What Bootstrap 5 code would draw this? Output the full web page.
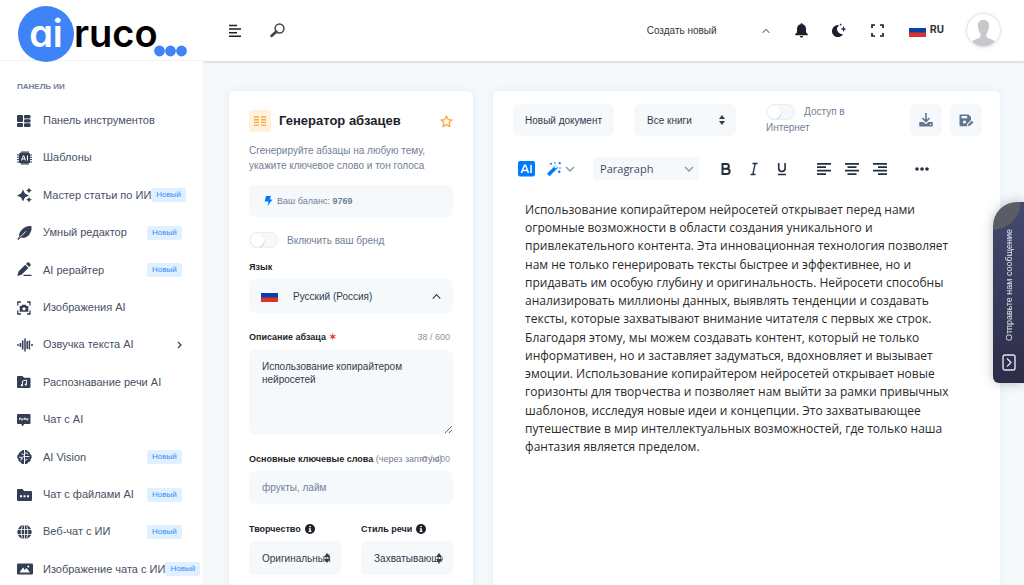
<!DOCTYPE html>
<html lang="ru">
<head>
<meta charset="utf-8">
<meta name="viewport" content="width=device-width, initial-scale=1">
<title>airuco – Генератор абзацев</title>
<link href="https://cdn.jsdelivr.net/npm/bootstrap@5.3.0/dist/css/bootstrap.min.css" rel="stylesheet">
<style>
:root{--soft:#f5f9fc;--ink:#1e1e2d;--slate:#3c465a;--dim:#728096;--azure:#007bff}
body{font-family:"Liberation Sans",Arial,sans-serif;font-size:10px;line-height:15px;color:var(--ink);background:var(--soft)}
svg{display:block;flex:none}
button{line-height:inherit;color:inherit}
.sidebar{width:203px;flex:none;background:#fff}
.brand-row{height:61px;border-bottom:1px solid #eff1f4;padding:6px 0 0 18px}
.brand-logo{font-family:Inter,sans-serif;font-weight:600;font-size:38px;line-height:54px;font-feature-settings:"cv11";color:#000;position:relative}
.brand-disc{width:56px;height:56px;background:#3f83f8;color:#fff;border-radius:50%}
.brand-dots{position:absolute;left:136px;top:39px}
.side-title{font-size:8px;font-weight:700;color:var(--dim);padding:18px 17px 0;line-height:15px}
.side-list{padding:8px 4px 0 17px}
.side-link{display:flex;align-items:center;font-size:11px;line-height:3.4;color:#475063;text-decoration:none;white-space:nowrap}
.side-link svg{margin-right:10px;color:#343e52}
.side-text{min-width:104px;flex:none}
.side-link .side-arrow{margin:0 15px 0 auto}
.new-tag{font-size:8px;font-weight:400;line-height:14px;padding:0 5px;border-radius:2px;background:#e1f0ff;color:#2f8dff}
.topbar{height:61px;background:#fff;box-shadow:0 1px 3px rgba(50,60,80,.22);padding:0 24px 0 26px}
.create-btn{width:123px;font-size:10px;color:#33363f}
.lang-code{font-size:11px;font-weight:700;font-family:Roboto,sans-serif;color:#33363f}
.user-pic{width:33px;height:33px;border-radius:50%;box-shadow:0 0 3px rgba(0,0,0,.25);overflow:hidden;background:#fff}
.work{padding:30px 24px 30px 26px;display:grid;grid-template-columns:13fr 27fr;gap:20px;overflow:auto;scrollbar-width:none}
.panel{background:#fff;border-radius:6px;box-shadow:0 0 10px rgba(60,90,130,.07);min-width:0;min-height:520px}
.form-panel{padding:19px 20px}
.tool-ico{width:22px;height:22px;background:#fff1dc;border-radius:3px;color:#ffa73c}
.tool-name{font-size:13px;line-height:22px;font-weight:700;margin:0}
.soft-box{background:var(--soft);border:0;border-radius:6px;font-size:10px;color:#33394a}
.dim-text{color:var(--dim)}
.balance{height:32px;margin-top:12px;padding:0 15px;font-size:9px}
.toggle-sw.form-check-input{width:29px;height:16px;margin:0;border:1px solid #e9eef3;border-radius:16px;background-color:var(--soft);background-size:15px;box-shadow:none;float:none;vertical-align:top;
background-image:url("data:image/svg+xml,%3Csvg xmlns='http://www.w3.org/2000/svg' viewBox='-8 -8 16 16'%3E%3Ccircle cx='.5' cy='.8' r='7' fill='%23c9d0d8'/%3E%3Ccircle r='7' fill='%23fff'/%3E%3C/svg%3E");background-repeat:no-repeat;background-position:left center}
.field-name{font-size:9px;font-weight:700;line-height:12px;color:var(--ink)}
.must{color:#f1341c}
.counter{font-size:9px;line-height:12px;color:#8a94a3;margin-right:3px}
textarea.soft-box{height:84px;line-height:13px;padding:10px 13px;resize:vertical}
input.soft-box::placeholder{color:var(--dim);opacity:1}
.pick{appearance:none;width:100%;height:34px;padding:0 10px 0 13px;background:var(--soft) no-repeat right 11px center/6px 10px;
background-image:url("data:image/svg+xml,%3Csvg xmlns='http://www.w3.org/2000/svg' viewBox='0 0 6 10'%3E%3Cpath d='M0 4l3-4 3 4zM0 6h6l-3 4z' fill='%23343a40'/%3E%3C/svg%3E")}
.doc-panel{padding:13px 18px 20px 20px}
.net-label{width:88px;line-height:15px}
.sq-btn{width:32px;height:32px;padding:0;color:#64758f}
.editor-bar{margin-top:21px;height:23px;padding-left:5px;color:#222f3e}
.editor-bar button{background:none;border:0;padding:0}
.para-pick{appearance:none;width:106px;height:23px;padding:0 7px;border:0;border-radius:4px;font:11px "Open Sans",sans-serif;color:#434c5c;margin-left:18px;
background:var(--soft) url("data:image/svg+xml,%3Csvg xmlns='http://www.w3.org/2000/svg' viewBox='0 0 10 6'%3E%3Cpath d='M1 1l4 4 4-4' fill='none' stroke='%238b94a1' stroke-width='1.3'/%3E%3C/svg%3E") no-repeat right 5px center/10px 6px}
.prose{font-family:"Open Sans",sans-serif;font-size:12px;line-height:1.52;color:#2a2a2a;margin:21px 30px 0 12px}
.contact-tab{position:fixed;right:0;top:202px;width:31px;height:181px;border:0;padding:0 0 12px;border-radius:24px 0 0 6px;color:#e3e5ef;background:radial-gradient(circle at 0 0,#5a5c68 0 27px,transparent 28px),linear-gradient(#434a70,#2d2c48);box-shadow:0 0 12px rgba(0,0,0,.25);font-size:9px}
.tab-words{writing-mode:vertical-rl;transform:rotate(180deg);white-space:nowrap;line-height:14px}
</style>
</head>
<body>
<svg width="0" height="0" class="position-absolute" aria-hidden="true">
<defs>
<symbol id="flag" viewBox="0 0 17 12"><path fill="#fafbfc" d="M0 0h17v4H0z"/><path fill="#0b3fae" d="M0 3h17v5H0z"/><path fill="#d8342b" d="M0 7.500h17V12H0z"/></symbol>
<symbol id="up" viewBox="0 0 8 6"><path d="M.7 4.800L4 1.300l3.300 3.500" fill="none" stroke="currentColor"/></symbol>
<symbol id="info" viewBox="0 0 10 10"><circle cx="5" cy="5" r="5" fill="#1e1e2d"/><path d="M4.200 2h1.600v1.300H4.200zM3.800 4.200h2v2.600h.6V8H3.700V6.800h.6V5.300h-.5z" fill="#fff"/></symbol>
</defs>
</svg>
<div class="d-flex vh-100 overflow-hidden">
<aside class="sidebar overflow-hidden">
<div class="brand-row">
<a href="#" class="brand-logo d-flex text-decoration-none" aria-label="airuco"><span class="brand-disc d-flex justify-content-center">ai</span><span>ruco</span>
<svg class="brand-dots" width="33" height="12" viewBox="0 0 33 12" fill="#3f83f8"><circle cx="5.500" cy="6" r="5.400"/><circle cx="16.500" cy="6" r="5.400"/><circle cx="27.500" cy="6" r="5.400"/></svg></a>
</div>
<div class="side-title">ПАНЕЛЬ ИИ</div>
<nav class="side-list">
<a class="side-link" href="#"><svg width="16" height="16" viewBox="0 0 16 16" fill="currentColor"><rect x="0" y="2" width="6" height="7" rx="1"/><rect x="0" y="10" width="6" height="4" rx="1"/><rect x="7" y="2" width="6.500" height="3.500" rx="1"/><rect x="7" y="6.300" width="6.500" height="3.200" rx="1"/><rect x="7" y="10.300" width="6.500" height="3.700" rx="1"/></svg><span class="side-text">Панель инструментов</span></a>
<a class="side-link" href="#"><svg width="16" height="16" viewBox="0 0 16 16"><path d="M5 1v14M7 1v14M9 1v14M11 1v14M0 5h15M0 7.300h15M0 9.600h15M0 12h15" stroke="currentColor"/><rect x="2" y="2.500" width="11" height="11" rx="2" fill="currentColor"/><path d="M4.500 10.500L6.300 5.700h.5l1.800 4.800M5.200 9h2.700M10.500 5.500v5" fill="none" stroke="#fff"/></svg><span class="side-text">Шаблоны</span></a>
<a class="side-link" href="#"><svg width="16" height="16" viewBox="0 0 16 16" fill="currentColor"><path d="M6 2.500l1.900 4.100L12 8.500 7.900 10.400 6 14.500 4.100 10.400 0 8.500 4.100 6.600zM12 .7l1 1.800 1.900.9-1.900 1L12 6.200l-1-1.800-1.900-1 1.900-.9zM12 10l1 1.800 1.900.9-1.900.9-1 1.900-1-1.900-1.800-.9 1.800-.9z"/></svg><span class="side-text">Мастер статьи по ИИ</span><span class="new-tag">Новый</span></a>
<a class="side-link" href="#"><svg width="16" height="16" viewBox="0 0 16 16"><path d="M14.500 1.200C11 .5 7.500 2 5.300 4.200 2.500 7 1.800 9 2.300 11.700L.3 14l.9.9 2.300-2.200c3 .4 6.500-.3 8.500-2.800 1.500-1.900 3.100-5 2.500-8.700z" fill="currentColor"/><path d="M3 12.300L9 6.300" stroke="#fff" stroke-width=".9"/></svg><span class="side-text">Умный редактор</span><span class="new-tag">Новый</span></a>
<a class="side-link" href="#"><svg width="16" height="16" viewBox="0 0 16 16" fill="currentColor"><path d="M9 1.900l1.100-1.100a1.600 1.600 0 012.200 0l.9.900a1.600 1.600 0 010 2.200l-1.100 1.100zM8.200 2.700l3.200 3.200L4.500 12.700.3 14l1.200-4.600zM6.500 12.800h8v1.300h-8z"/></svg><span class="side-text">AI рерайтер</span><span class="new-tag">Новый</span></a>
<a class="side-link" href="#"><svg width="16" height="16" viewBox="0 0 16 16"><path d="M4 2H.8v3.500M10 2h3v3.500M4 14H.8v-3.500M10 14h3v-3.500" fill="none" stroke="currentColor" stroke-width="1.300"/><path d="M2.700 5.900h1.800L5.300 4.700h3.400l.8 1.200h1.800V11.800H2.700z" fill="currentColor"/><circle cx="7" cy="8.800" r="1.600" fill="#fff"/></svg><span class="side-text">Изображения AI</span></a>
<a class="side-link" href="#"><svg width="16" height="16" viewBox="0 0 16 16"><path d="M.2 8h2M3.500 6v4M5.700 3.500v9M8 1.500v13M10.200 4v8M12.400 3.500v9M14 8h2" stroke="currentColor" stroke-width="1.500" fill="none"/></svg><span class="side-text">Озвучка текста AI</span><svg class="side-arrow" width="8" height="8" viewBox="0 0 8 8"><path d="M2 1l3 3-3 3" fill="none" stroke="currentColor" stroke-width="1.200"/></svg></a>
<a class="side-link" href="#"><svg width="16" height="16" viewBox="0 0 16 16"><path d="M1 2h4.500L7 3.700h5.500a1 1 0 011 1V13a1 1 0 01-1 1H1a1 1 0 01-1-1V3a1 1 0 011-1z" fill="currentColor"/><path d="M5.500 11.500V7l4-1v4.500" fill="none" stroke="#fff" stroke-width=".9"/><circle cx="4.800" cy="11.300" r="1.100" fill="#fff"/><circle cx="8.800" cy="10.500" r="1.100" fill="#fff"/></svg><span class="side-text">Распознавание речи AI</span></a>
<a class="side-link" href="#"><svg width="16" height="16" viewBox="0 0 16 16"><path d="M1 2h11.500a1 1 0 011 1v8a1 1 0 01-1 1H7.500L5 14.500 4.500 12H1a1 1 0 01-1-1V3a1 1 0 011-1z" fill="currentColor"/><path d="M2.500 7.900V6.200H4v1.600h2V6.200M7.500 7.900V6.200H9v1.600h2V6.200" fill="none" stroke="#fff" stroke-width=".9"/></svg><span class="side-text">Чат с AI</span></a>
<a class="side-link" href="#"><svg width="16" height="16" viewBox="0 0 16 16"><path d="M7 1C5.500.7 4.500 1.300 4.200 2.500 2.700 2.600 1.800 3.800 2 5 .6 5.700.2 6.800.3 8c0 1 .4 1.800 1 2.300 0 1.700.9 2.500 2.300 2.700.7 1.800 2 2.200 3.400 2zM8 1c1.500-.3 2.500.3 2.800 1.500 1.500.1 2.400 1.300 2.200 2.500 1.400.7 1.800 1.800 1.700 3 0 1-.4 1.800-1 2.300 0 1.700-.9 2.500-2.300 2.700-.7 1.800-2 2.200-3.400 2z" fill="currentColor"/><path d="M4.500 4.500L7 6M2 8.300h3.500L7 7.500M4 11.500V9.800h2M8 4h2l1 1.500M8 7.500h4.500M8 11.500l2.500-1.500" fill="none" stroke="#fff" stroke-width=".9"/></svg><span class="side-text">AI Vision</span><span class="new-tag">Новый</span></a>
<a class="side-link" href="#"><svg width="16" height="16" viewBox="0 0 16 16"><path d="M1 2h4.500L7 4h7a1 1 0 011 1v8a1 1 0 01-1 1H1a1 1 0 01-1-1V3a1 1 0 011-1z" fill="currentColor"/><path d="M3 8.300h2v2H3zM6.500 8.300h2v2h-2zM10 8.300h2v2h-2z" fill="#fff"/></svg><span class="side-text">Чат с файлами AI</span><span class="new-tag">Новый</span></a>
<a class="side-link" href="#"><svg width="16" height="16" viewBox="0 0 16 16"><circle cx="7.500" cy="8" r="7.200" fill="currentColor"/><path d="M0 5.500h15M0 10.500h15M7.500 0v16" stroke="#fff" stroke-width=".8"/><ellipse cx="7.500" cy="8" rx="3.300" ry="7.500" fill="none" stroke="#fff" stroke-width=".9"/></svg><span class="side-text">Веб-чат с ИИ</span><span class="new-tag">Новый</span></a>
<a class="side-link" href="#"><svg width="16" height="16" viewBox="0 0 16 16"><rect y="2.500" width="16" height="11" rx="1" fill="currentColor"/><path d="M2.500 11.500l3.500-5 1.800 2.500L9.500 7l3.500 4.500z" fill="#fff"/><circle cx="11.300" cy="5.500" r="1" fill="#fff"/></svg><span class="side-text">Изображение чата с ИИ</span><span class="new-tag">Новый</span></a>
</nav>
</aside>
<div class="flex-grow-1 d-flex flex-column overflow-hidden">
<header class="topbar d-flex align-items-center flex-shrink-0 position-relative">
<button class="btn p-0 border-0" aria-label="Меню"><svg width="13" height="14" viewBox="0 0 13 14"><path d="M0 1.500h8M0 5h12M0 8.700h8M0 12.300h12" stroke="#1e1e2d" stroke-width="1.500"/></svg></button>
<button class="btn p-0 border-0" style="margin-left:28px" aria-label="Поиск"><svg width="15" height="15" viewBox="0 0 15 15"><circle cx="9.500" cy="5.500" r="4.400" fill="none" stroke="#444" stroke-width="1.500"/><path d="M6.300 8.700L1.700 12.800" stroke="#444" stroke-width="2.800" stroke-linecap="round"/></svg></button>
<button class="btn p-0 border-0 ms-auto d-flex align-items-center justify-content-between create-btn">Создать новый<svg width="8" height="6"><use href="#up"/></svg></button>
<div class="d-flex align-items-center" style="margin-left:25px;gap:24px">
<button class="btn p-0 border-0" aria-label="Уведомления"><svg width="13" height="15" viewBox="0 0 13 15" fill="#1e1e2d"><path d="M6.500.3c.6 0 1 .4 1 1C9.800 1.800 11 3.700 11 6v3.200l1.800 2V12.200H.2v-1l1.800-2V6c0-2.300 1.200-4.200 3.500-4.700 0-.6.400-1 1-1zM4.800 13h3.400c-.2 1-.9 1.500-1.700 1.500S5 14 4.800 13z"/></svg></button>
<button class="btn p-0 border-0" aria-label="Тёмная тема"><svg width="15" height="15" viewBox="0 0 15 15" fill="#1e1e2d"><path d="M7 2.200A5 5 0 0011.200 11 6 6 0 117 2.200zM11.500 3l.8 2.200 2.200.8-2.200.8-.8 2.200-.8-2.200L8.500 6l2.200-.8zM8.700.2l.4 1 1 .4-1 .4-.4 1-.4-1-1-.4 1-.4z"/></svg></button>
<button class="btn p-0 border-0" aria-label="Полный экран"><svg width="13" height="13" viewBox="0 0 13 13"><path d="M1 4V1h3M9 1h3v3M12 9v3H9M4 12H1V9" fill="none" stroke="#1e1e2d" stroke-width="1.700"/></svg></button>
</div>
<button class="btn p-0 border-0 d-flex align-items-center lang-code" style="margin-left:25px;gap:4px"><svg width="17" height="12"><use href="#flag"/></svg>RU</button>
<button class="btn p-0 border-0 user-pic" style="margin-left:23px" aria-label="Профиль"><svg width="33" height="33" viewBox="0 0 33 33"><path d="M16.500 6c4 0 6 2.500 5.500 6.500-.3 3-1 5.500-2.500 7v3.500c1.500 1.800 6 2.300 8.500 4-3 4-7 5.500-11.500 5.500S8 31 5 27c2.500-1.700 7-2.200 8.500-4v-3.500c-1.500-1.500-2.200-4-2.500-7C10.500 8.500 12.500 6 16.500 6z" fill="#c6c8cb"/></svg></button>
</header>
<main class="work flex-grow-1">
<section class="panel form-panel">
<div class="d-flex align-items-center">
<span class="tool-ico d-flex align-items-center justify-content-center"><svg width="12" height="12" viewBox="0 0 12 12"><path d="M0 2h5M7 2h5M0 4.700h5M7 4.700h5M0 7.400h5M7 7.400h5M0 10.100h5M7 10.100h5" stroke="currentColor" stroke-width="1.400"/></svg></span>
<h1 class="tool-name ms-2 flex-grow-1">Генератор абзацев</h1>
<button class="btn p-0 border-0" aria-label="В избранное"><svg width="13" height="13" viewBox="0 0 12 12"><path d="M6 .9l1.500 3.300 3.600.4L8.400 7l.8 3.700L6 8.900l-3.200 1.800L3.600 7 .9 4.600l3.600-.4z" fill="none" stroke="#ffa73c" stroke-width="1.200" stroke-linejoin="round"/></svg></button>
</div>
<p class="dim-text mb-0" style="margin-top:11px">Сгенерируйте абзацы на любую тему, укажите ключевое слово и тон голоса</p>
<div class="soft-box d-flex align-items-center dim-text balance"><svg class="me-1" width="9" height="10" viewBox="0 0 9 10"><path d="M2 0h5L5.800 3.500H8.500L3.500 10l1-4.500H.7z" fill="#007bff"/></svg><span>Ваш баланс: <b>9769</b></span></div>
<div class="d-flex align-items-center" style="margin-top:15px;gap:9px"><input class="form-check-input toggle-sw" type="checkbox" role="switch" id="brand"><label for="brand" class="dim-text">Включить ваш бренд</label></div>
<span class="field-name d-block" id="lang-name" style="margin-top:13px">Язык</span>
<button class="soft-box w-100 d-flex align-items-center" aria-labelledby="lang-name lang-value" style="height:34px;margin-top:6px;padding:0 12px"><svg width="17" height="12"><use href="#flag"/></svg><span id="lang-value" class="flex-grow-1 text-start" style="margin-left:15px">Русский (Россия)</span><svg width="9" height="7"><use href="#up"/></svg></button>
<div class="d-flex justify-content-between" style="margin-top:18px"><label class="field-name" for="about">Описание абзаца <span class="must">✶</span></label><span class="counter">38 / 600</span></div>
<textarea id="about" class="soft-box w-100 d-block" style="margin-top:7px">Использование копирайтером нейросетей</textarea>
<div class="position-relative" style="margin-top:19px"><label class="field-name d-block text-nowrap" for="keys">Основные ключевые слова <span class="fw-normal dim-text">(через запятую)</span></label><span class="counter position-absolute top-0 end-0">0 / 400</span></div>
<input id="keys" class="soft-box w-100 d-block" style="height:33px;margin-top:6px;padding:0 13px" placeholder="фрукты, лайм">
<div class="d-flex" style="margin-top:19px;gap:20px">
<div style="flex:1 1 0;min-width:0"><label class="field-name d-flex align-items-center gap-1" for="creative">Творчество <svg width="10" height="10"><use href="#info"/></svg></label><select id="creative" class="soft-box pick" style="margin-top:6px"><option>Оригинальный</option></select></div>
<div style="flex:1 1 0;min-width:0"><label class="field-name d-flex align-items-center gap-1" for="tone">Стиль речи <svg width="10" height="10"><use href="#info"/></svg></label><select id="tone" class="soft-box pick" style="margin-top:6px"><option>Захватывающий</option></select></div>
</div>
</section>
<section class="panel doc-panel">
<div class="d-flex align-items-start" style="gap:20px">
<button class="soft-box text-nowrap" style="height:32px;padding:0 12px">Новый документ</button>
<select class="soft-box pick" style="width:102px;height:32px" aria-label="Книги"><option>Все книги</option></select>
<div class="net-label dim-text" style="margin-left:10px"><input class="form-check-input toggle-sw" type="checkbox" role="switch" id="net"><label class="d-inline" for="net" style="margin-left:9px">Доступ в Интернет</label></div>
<div class="d-flex gap-2 ms-auto">
<button class="soft-box sq-btn d-flex align-items-center justify-content-center" aria-label="Скачать"><svg width="14" height="14" viewBox="0 0 14 14"><path d="M7 0v8M3.500 5L7 8.500 10.500 5" fill="none" stroke="currentColor" stroke-width="1.600"/><path d="M.3 9h4L7 11.200 9.700 9h4v4.500H.3z" fill="currentColor"/><circle cx="11.500" cy="11.500" r=".7" fill="#fff"/></svg></button>
<button class="soft-box sq-btn d-flex align-items-center justify-content-center" aria-label="Сохранить"><svg width="15" height="13" viewBox="0 0 15 13"><path d="M1.500.5h8L12 3v3L8 10v2.300H1.500a1 1 0 01-1-1v-10a1 1 0 011-.8z" fill="currentColor"/><path d="M2.500 2h5.700v2.300H2.500z" fill="#f5f9fc"/><circle cx="5.500" cy="8" r="1.600" fill="#f5f9fc"/><path d="M8.600 12.500l.4-2.200L12.700 6.500l2 2-3.800 3.600z" fill="currentColor" stroke="#f5f9fc" stroke-width=".6"/></svg></button>
</div>
</div>
<div class="editor-bar d-flex align-items-center">
<button aria-label="AI"><svg width="17" height="16" viewBox="0 0 17 16"><rect width="17" height="15.500" rx="2" fill="#007bff"/><path d="M3.300 12L6.500 4.200h1L10.500 12M4.500 9.500h5M13 3.700V12" fill="none" stroke="#fff" stroke-width="1.500"/></svg></button>
<button class="d-flex align-items-center" style="margin-left:12px;gap:4px" aria-label="Улучшить текст"><svg width="14" height="14" viewBox="0 0 14 14" fill="#007bff"><path d="M0 11.700L8.500 3.200l2.600 2.600L2.500 14.200z"/><path d="M7.200 5l1.700-1.600 1.500 1.500L8.700 6.500z" fill="#fff"/><circle cx="4" cy="1.700" r="1"/><circle cx="8" cy="1" r=".8"/><circle cx="12.700" cy="1.200" r="1.100"/><circle cx="13" cy="6" r=".8"/><circle cx="12.300" cy="9.800" r="1.200"/></svg><svg width="10" height="6" viewBox="0 0 10 6"><path d="M1 1l4 4 4-4" fill="none" stroke="#8b94a1" stroke-width="1.300"/></svg></button>
<select class="para-pick" aria-label="Стиль абзаца"><option>Paragraph</option></select>
<div class="d-flex" style="margin-left:20px;gap:14px">
<button aria-label="Полужирный"><svg width="14" height="14" viewBox="0 0 14 14"><path d="M3.500 2H7.500a2.300 2.300 0 010 4.700H3.500zM3.500 6.700H8a2.600 2.600 0 010 5.300H3.500z" fill="none" stroke="currentColor" stroke-width="2"/></svg></button>
<button aria-label="Курсив"><svg width="14" height="14" viewBox="0 0 14 14"><path d="M5.500 1.500h5M3.500 12.500h5M8.200 1.500l-2.400 11" fill="none" stroke="currentColor" stroke-width="1.300"/></svg></button>
<button aria-label="Подчёркнутый"><svg width="14" height="14" viewBox="0 0 14 14"><path d="M3.700 1v5.300a3.200 3.200 0 006.400 0V1M3 12.500h8" fill="none" stroke="currentColor" stroke-width="1.600"/></svg></button>
</div>
<div class="d-flex" style="margin-left:28px;gap:14px">
<button aria-label="По левому краю"><svg width="14" height="14" viewBox="0 0 14 14"><path d="M0 1.800h14M0 5.200h9M0 8.700h14M0 12.200h9" stroke="currentColor" stroke-width="1.700"/></svg></button>
<button aria-label="По центру"><svg width="14" height="14" viewBox="0 0 14 14"><path d="M0 1.800h14M2.500 5.200h9M0 8.700h14M2.500 12.200h9" stroke="currentColor" stroke-width="1.700"/></svg></button>
<button aria-label="По правому краю"><svg width="14" height="14" viewBox="0 0 14 14"><path d="M0 1.800h14M5 5.200h9M0 8.700h14M5 12.200h9" stroke="currentColor" stroke-width="1.700"/></svg></button>
</div>
<button style="margin-left:28px" aria-label="Ещё"><svg width="14" height="4" viewBox="0 0 14 4" fill="currentColor"><circle cx="2" cy="2" r="1.800"/><circle cx="7" cy="2" r="1.800"/><circle cx="12" cy="2" r="1.800"/></svg></button>
</div>
<p class="prose">Использование копирайтером нейросетей открывает перед нами огромные возможности в области создания уникального и привлекательного контента. Эта инновационная технология позволяет нам не только генерировать тексты быстрее и эффективнее, но и придавать им особую глубину и оригинальность. Нейросети способны анализировать миллионы данных, выявлять тенденции и создавать тексты, которые захватывают внимание читателя с первых же строк. Благодаря этому, мы можем создавать контент, который не только информативен, но и заставляет задуматься, вдохновляет и вызывает эмоции. Использование копирайтером нейросетей открывает новые горизонты для творчества и позволяет нам выйти за рамки привычных шаблонов, исследуя новые идеи и концепции. Это захватывающее путешествие в мир интеллектуальных возможностей, где только наша фантазия является пределом.</p>
</section>
</main>
</div>
</div>
<button class="contact-tab d-flex flex-column align-items-center justify-content-end" style="gap:13px"><span class="tab-words">Отправьте нам сообщение</span><svg width="14" height="17" viewBox="0 0 14 17"><rect x="1" y="1" width="12" height="15" rx="2" fill="none" stroke="currentColor" stroke-width="1.400"/><path d="M5 4.500l4 4-4 4" fill="none" stroke="currentColor" stroke-width="1.200"/></svg></button>
<script src="https://cdn.jsdelivr.net/npm/bootstrap@5.3.0/dist/js/bootstrap.bundle.min.js"></script>
</body>
</html>
